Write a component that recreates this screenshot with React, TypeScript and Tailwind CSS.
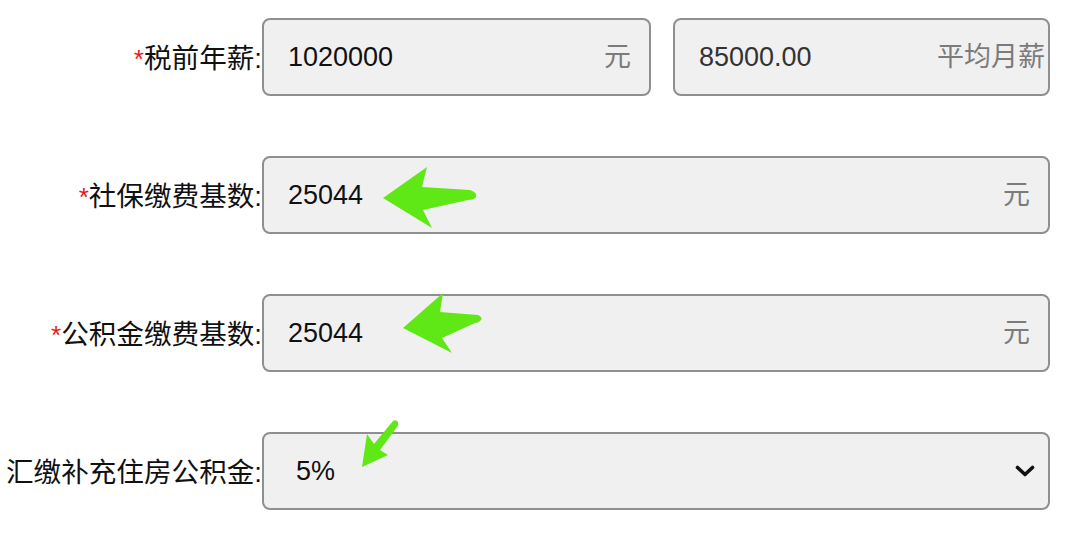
const font = '[font-family:"Liberation_Sans","Noto_Sans_CJK_SC",sans-serif]'

interface FieldProps {
  label: string
  required?: boolean
  children: React.ReactNode
}

const Field: React.FC<FieldProps> = ({ label, required, children }) => (
  <div className="flex items-center">
    <label className="w-[262px] shrink-0 text-right text-[27.6px] text-[#111] leading-none whitespace-nowrap relative top-[2px]">
      {required && <span className="text-[26px] text-[#e01b1b]">*</span>}
      {label}:
    </label>
    <div className="flex flex-1 gap-[22px]">{children}</div>
  </div>
)

const Box: React.FC<{ value: string; unit?: string; tight?: boolean; className?: string }> = ({
  value,
  unit,
  tight,
  className = '',
}) => (
  <div
    className={`h-[78px] flex items-center rounded-[8px] border-2 border-[#8f8f8f] bg-[#f1f0f1] pl-[24px] ${
      tight ? 'pr-[3px]' : 'pr-[18px]'
    } ${className}`}
  >
    <span className="flex-1 text-[27px] text-[#111]">{value}</span>
    {unit && <span className="text-[27px] text-[#7b7b7b]">{unit}</span>}
  </div>
)

export default function App() {
  return (
    <div className={`relative w-[1080px] h-[556px] bg-white overflow-hidden ${font}`}>
      <div className="flex flex-col gap-[60px] pt-[18px] pr-[30px]">
        <Field label="税前年薪" required>
          <Box value="1020000" unit="元" className="w-[389px]" />
          <Box value="85000.00" unit="平均月薪" tight className="flex-1 [&>span:first-child]:text-[#333]" />
        </Field>
        <Field label="社保缴费基数" required>
          <Box value="25044" unit="元" className="flex-1" />
        </Field>
        <Field label="公积金缴费基数" required>
          <Box value="25044" unit="元" className="flex-1" />
        </Field>
        <Field label="汇缴补充住房公积金">
          <div className="flex-1 h-[78px] flex items-center rounded-[8px] border-2 border-[#8f8f8f] bg-[#f1f0f1] pl-[32px] pr-[13px]">
            <span className="flex-1 text-[27px] text-[#111]">5%</span>
            <svg width="20" height="12" viewBox="0 0 20 12">
              <path d="M2.5 2.5 L10 9.5 L17.5 2.5" fill="none" stroke="#111" strokeWidth="3.6" strokeLinecap="round" strokeLinejoin="round" />
            </svg>
          </div>
        </Field>
      </div>

      {/* 标注箭头 */}
      <svg className="absolute inset-0 pointer-events-none" width="1080" height="556" viewBox="0 0 1080 556">
        <path
          d="M383 198 L427 167 L422 187 L470 190 Q478 193 476 197 Q474 200 468 200 L423 210 L432 228 Z"
          fill="#5fe816"
        />
        <path
          d="M403 328 L443 293 L440 312 L478 315 Q484 318 480 321 Q478 323 475 323 L442 338 L452 353 Z"
          fill="#5fe816"
        />
        <path
          d="M362 467 L367 434 L374 444 L393 421 Q396 419 398 422 Q399 425 397 427 L380 450 L388 455 Z"
          fill="#5fe816"
        />
      </svg>
    </div>
  )
}
